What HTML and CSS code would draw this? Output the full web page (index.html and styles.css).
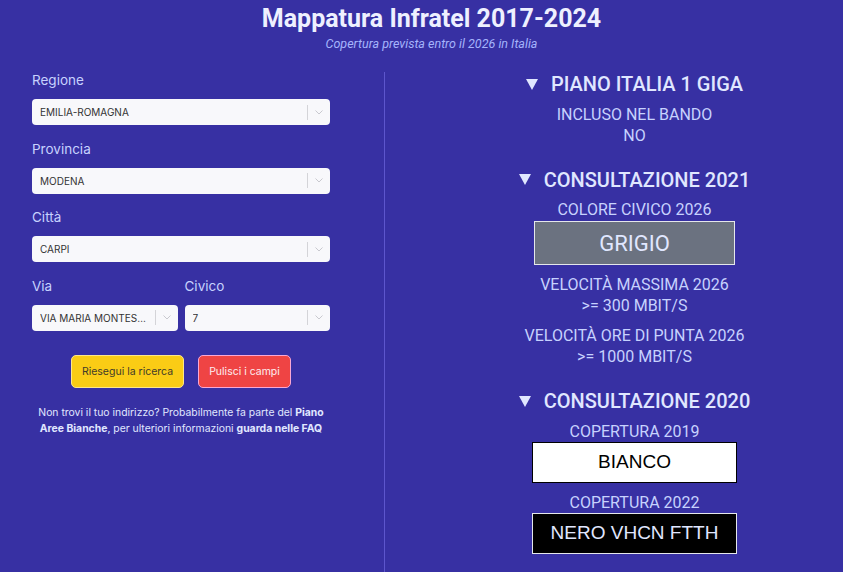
FILE: index.html
```html
<!DOCTYPE html>
<html lang="it">
<head>
<meta charset="utf-8">
<title>Mappatura Infratel 2017-2024</title>
<link rel="stylesheet" href="styles.css">
</head>
<body>
<header class="hero">
  <h1 class="title">Mappatura Infratel 2017-2024</h1>
  <p class="subtitle">Copertura prevista entro il 2026 in Italia</p>
</header>
<main class="layout">
  <section class="form-col">
    <div class="field">
      <label class="field-label">Regione</label>
      <div class="select">
        <span class="select-value">EMILIA-ROMAGNA</span>
        <span class="select-sep"></span>
        <span class="select-arrow"><svg width="8" height="5" viewBox="0 0 8 5"><polyline points="0.5,0.5 4,4 7.5,0.5" fill="none" stroke="#c9c9cf" stroke-width="1"/></svg></span>
      </div>
    </div>
    <div class="field">
      <label class="field-label">Provincia</label>
      <div class="select">
        <span class="select-value">MODENA</span>
        <span class="select-sep"></span>
        <span class="select-arrow"><svg width="8" height="5" viewBox="0 0 8 5"><polyline points="0.5,0.5 4,4 7.5,0.5" fill="none" stroke="#c9c9cf" stroke-width="1"/></svg></span>
      </div>
    </div>
    <div class="field">
      <label class="field-label">Città</label>
      <div class="select">
        <span class="select-value">CARPI</span>
        <span class="select-sep"></span>
        <span class="select-arrow"><svg width="8" height="5" viewBox="0 0 8 5"><polyline points="0.5,0.5 4,4 7.5,0.5" fill="none" stroke="#c9c9cf" stroke-width="1"/></svg></span>
      </div>
    </div>
    <div class="field-row">
      <div class="field">
        <label class="field-label">Via</label>
        <div class="select">
          <span class="select-value">VIA MARIA MONTESSORI</span>
          <span class="select-sep"></span>
          <span class="select-arrow"><svg width="8" height="5" viewBox="0 0 8 5"><polyline points="0.5,0.5 4,4 7.5,0.5" fill="none" stroke="#c9c9cf" stroke-width="1"/></svg></span>
        </div>
      </div>
      <div class="field">
        <label class="field-label">Civico</label>
        <div class="select">
          <span class="select-value">7</span>
          <span class="select-sep"></span>
          <span class="select-arrow"><svg width="8" height="5" viewBox="0 0 8 5"><polyline points="0.5,0.5 4,4 7.5,0.5" fill="none" stroke="#c9c9cf" stroke-width="1"/></svg></span>
        </div>
      </div>
    </div>
    <div class="actions">
      <button class="btn btn-yellow" type="button">Riesegui la ricerca</button>
      <button class="btn btn-red" type="button">Pulisci i campi</button>
    </div>
    <p class="hint">Non trovi il tuo indirizzo? Probabilmente fa parte del <b>Piano Aree Bianche</b>, per ulteriori informazioni <b>guarda nelle FAQ</b></p>
  </section>

  <section class="result-col">
    <details class="group" open>
      <summary class="group-title"><span class="caret"></span>PIANO ITALIA 1 GIGA</summary>
      <div class="item">
        <div class="item-line">INCLUSO NEL BANDO</div>
        <div class="item-line">NO</div>
      </div>
    </details>

    <details class="group" open>
      <summary class="group-title"><span class="caret"></span>CONSULTAZIONE 2021</summary>
      <div class="item">
        <div class="item-line">COLORE CIVICO 2026</div>
        <div class="badge badge-grey">GRIGIO</div>
      </div>
      <div class="item">
        <div class="item-line">VELOCITÀ MASSIMA 2026</div>
        <div class="item-line">&gt;= 300 MBIT/S</div>
      </div>
      <div class="item">
        <div class="item-line">VELOCITÀ ORE DI PUNTA 2026</div>
        <div class="item-line">&gt;= 1000 MBIT/S</div>
      </div>
    </details>

    <details class="group" open>
      <summary class="group-title"><span class="caret"></span>CONSULTAZIONE 2020</summary>
      <div class="item">
        <div class="item-line">COPERTURA 2019</div>
        <div class="badge badge-white">BIANCO</div>
      </div>
      <div class="item">
        <div class="item-line">COPERTURA 2022</div>
        <div class="badge badge-black">NERO VHCN FTTH</div>
      </div>
    </details>
  </section>
</main>
</body>
</html>
```

FILE: styles.css
```css
html, body {
  margin: 0;
  padding: 0;
}

body {
  background: #3730a3;
  font-family: Inter, "Noto Sans", sans-serif;
  color: #e0e7ff;
  min-height: 100vh;
  display: flex;
  flex-direction: column;
  overflow: hidden;
}

.hero {
  padding: 4px 0 0 20px;
  text-align: center;
}

.title {
  margin: 0;
  font-family: Roboto, sans-serif;
  font-weight: 700;
  font-size: 25px;
  line-height: 30px;
  color: #eef0ff;
}

.subtitle {
  margin: 3px 0 0;
  font-family: Roboto, sans-serif;
  font-style: italic;
  font-size: 12.5px;
  line-height: 14px;
  color: #a5b4fc;
}

.layout {
  flex: 1;
  display: flex;
  margin-top: 21px;
}

/* left column */
.form-col {
  width: 298px;
  padding: 0 54px 0 32px;
  flex: none;
}

.field + .field {
  margin-top: 15.5px;
}

.field-row {
  display: grid;
  grid-template-columns: minmax(0, 1fr) minmax(0, 1fr);
  column-gap: 7px;
  margin-top: 15.5px;
}

.field-row .field + .field {
  margin-top: 0;
}

.field-label {
  display: block;
  font-size: 13.5px;
  line-height: 16px;
  color: #c7d2fe;
}

.select {
  margin-top: 11px;
  height: 26px;
  display: flex;
  align-items: center;
  background: #f8f8fb;
  border-radius: 4px;
  padding-left: 8px;
}

.select-value {
  flex: 1;
  min-width: 0;
  font-size: 10px;
  color: #333333;
  white-space: nowrap;
  overflow: hidden;
  text-overflow: ellipsis;
}

.select-sep {
  width: 1px;
  height: 15px;
  background: #d4d4d8;
  margin-left: 6px;
}

.select-arrow {
  width: 22px;
  display: flex;
  justify-content: center;
  align-items: center;
}

.select-arrow svg {
  display: block;
}

.actions {
  display: flex;
  justify-content: center;
  gap: 14px;
  margin-top: 24px;
}

.btn {
  height: 33px;
  padding: 0 9px;
  border-radius: 5px;
  font-family: Inter, sans-serif;
  font-size: 10.5px;
  white-space: nowrap;
  cursor: pointer;
}

.btn-yellow {
  background: #facc15;
  border: 1px solid #fde68a;
  color: #3f3a2a;
  min-width: 113px;
}

.btn-red {
  background: #ef4444;
  border: 1px solid #f9a8d4;
  color: #fdecef;
  min-width: 93px;
}

.hint {
  margin: 17px 0 0;
  text-align: center;
  font-size: 10.4px;
  line-height: 16.5px;
  color: #e0e7ff;
}

.hint b {
  font-weight: 700;
}

/* right column */
.result-col {
  flex: 1;
  border-left: 1px solid #5d56cc;
  padding-left: 41px;
  text-align: center;
  font-family: Roboto, sans-serif;
}

.group + .group {
  margin-top: 22px;
}

.group-title {
  list-style: none;
  display: flex;
  justify-content: center;
  align-items: center;
  gap: 13px;
  font-size: 20px;
  line-height: 24px;
  font-weight: 500;
  color: #e0e7ff;
  cursor: pointer;
}

.group-title::-webkit-details-marker {
  display: none;
}

.caret {
  width: 0;
  height: 0;
  border-left: 6.5px solid transparent;
  border-right: 6.5px solid transparent;
  border-top: 11px solid #e0e7ff;
}

.item {
  margin-top: 7.5px;
}

.item + .item {
  margin-top: 9px;
}

.item-line {
  font-size: 16px;
  line-height: 21px;
  color: #c7d2fe;
}

.badge {
  margin: 0 auto;
  box-sizing: border-box;
  display: flex;
  justify-content: center;
  align-items: center;
}

.badge-grey {
  width: 201px;
  height: 44px;
  margin-top: 1px;
  background: #6b7280;
  border: 1px solid #e5e7eb;
  color: #e0e7ff;
  font-size: 22px;
}

.badge-white,
.badge-black {
  width: 205px;
  height: 41px;
  font-family: "Liberation Sans", Arial, sans-serif;
  font-size: 19px;
}

.badge-white {
  background: #ffffff;
  border: 1px solid #000000;
  color: #000000;
}

.badge-black {
  background: #000000;
  border: 1px solid #e5e7eb;
  color: #e0e7ff;
}
```
